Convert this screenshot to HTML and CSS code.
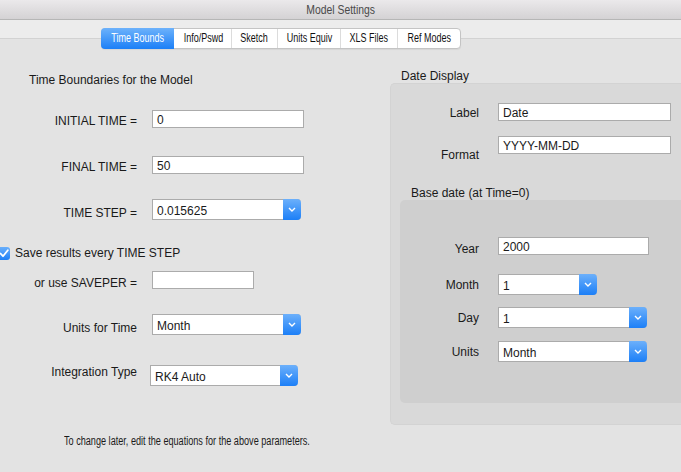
FILE: index.html
```html
<!DOCTYPE html>
<html>
<head>
<meta charset="utf-8">
<title>Model Settings</title>
<link rel="stylesheet" href="styles.css">
</head>
<body>
<div class="titlebar"><span class="narrow title-text">Model Settings</span></div>
<div class="tabbar">
  <div class="segmented">
    <div class="seg active"><span class="narrow">Time Bounds</span></div>
    <div class="seg"><span class="narrow">Info/Pswd</span></div>
    <div class="seg"><span class="narrow">Sketch</span></div>
    <div class="seg"><span class="narrow">Units Equiv</span></div>
    <div class="seg"><span class="narrow">XLS Files</span></div>
    <div class="seg"><span class="narrow">Ref Modes</span></div>
  </div>
</div>
<div class="content">
  <div class="left">
    <div class="heading">Time Boundaries for the Model</div>
    <div class="row row-initial">
      <span class="lbl pt4">INITIAL TIME =</span>
      <div class="field w152">0</div>
    </div>
    <div class="row row-final">
      <span class="lbl pt4">FINAL TIME =</span>
      <div class="field w152">50</div>
    </div>
    <div class="row row-step">
      <span class="lbl pt7">TIME STEP =</span>
      <div class="select w149"><span class="select-val">0.015625</span><span class="select-btn"><svg width="8" height="5" viewBox="0 0 8 5"><polyline points="1,1 4,4 7,1" fill="none" stroke="#fff" stroke-width="1.4"/></svg></span></div>
    </div>
    <div class="check-row">
      <span class="checkbox"><svg width="10" height="9" viewBox="0 0 10 9"><polyline points="1.5,4.5 4,7.2 8.8,1.2" fill="none" stroke="#fff" stroke-width="1.8" stroke-linecap="round" stroke-linejoin="round"/></svg></span>
      <span class="check-label">Save results every TIME STEP</span>
    </div>
    <div class="row row-saveper">
      <span class="lbl pt5">or use SAVEPER =</span>
      <div class="field w102"></div>
    </div>
    <div class="row row-units">
      <span class="lbl pt7">Units for Time</span>
      <div class="select w149"><span class="select-val">Month</span><span class="select-btn"><svg width="8" height="5" viewBox="0 0 8 5"><polyline points="1,1 4,4 7,1" fill="none" stroke="#fff" stroke-width="1.4"/></svg></span></div>
    </div>
    <div class="row row-integration">
      <span class="lbl">Integration Type</span>
      <div class="select w148 tight"><span class="select-val">RK4 Auto</span><span class="select-btn"><svg width="8" height="5" viewBox="0 0 8 5"><polyline points="1,1 4,4 7,1" fill="none" stroke="#fff" stroke-width="1.4"/></svg></span></div>
    </div>
    <p class="note"><span class="note-text">To change later, edit the equations for the above parameters.</span></p>
  </div>
  <div class="right">
    <div class="group-title">Date Display</div>
    <div class="panel">
      <div class="prow">
        <span class="plbl pt3">Label</span>
        <div class="field w173">Date</div>
      </div>
      <div class="prow prow-format">
        <span class="plbl pt12">Format</span>
        <div class="field w173">YYYY-MM-DD</div>
      </div>
      <div class="group-title sub">Base date (at Time=0)</div>
      <div class="inner-panel">
        <div class="prow">
          <span class="plbl pt5">Year</span>
          <div class="field w151">2000</div>
        </div>
        <div class="prow prow-month">
          <span class="plbl pt4">Month</span>
          <div class="select w99"><span class="select-val">1</span><span class="select-btn"><svg width="8" height="5" viewBox="0 0 8 5"><polyline points="1,1 4,4 7,1" fill="none" stroke="#fff" stroke-width="1.4"/></svg></span></div>
        </div>
        <div class="prow prow-day">
          <span class="plbl pt4">Day</span>
          <div class="select w149"><span class="select-val">1</span><span class="select-btn"><svg width="8" height="5" viewBox="0 0 8 5"><polyline points="1,1 4,4 7,1" fill="none" stroke="#fff" stroke-width="1.4"/></svg></span></div>
        </div>
        <div class="prow prow-units">
          <span class="plbl pt4">Units</span>
          <div class="select w149"><span class="select-val">Month</span><span class="select-btn"><svg width="8" height="5" viewBox="0 0 8 5"><polyline points="1,1 4,4 7,1" fill="none" stroke="#fff" stroke-width="1.4"/></svg></span></div>
        </div>
      </div>
    </div>
  </div>
</div>
</body>
</html>
```

FILE: styles.css
```css
* { box-sizing: border-box; }

body {
  margin: 0;
  width: 681px;
  height: 472px;
  overflow: hidden;
  background: #e3e3e3;
  font-family: "Liberation Sans", Arial, sans-serif;
  font-size: 12px;
  color: #1a1a1a;
}

.narrow {
  display: inline-block;
  white-space: nowrap;
  transform: scaleX(0.72);
}

.titlebar {
  height: 20px;
  line-height: 19px;
  text-align: center;
  background: linear-gradient(#ebe9eb, #d4d2d4);
  border-bottom: 1px solid #b6b6b6;
  font-size: 13.5px;
  color: #4a4a4a;
}

.title-text { transform: scaleX(0.77); }

.tabbar {
  height: 29px;
  padding: 8px 0 0 101px;
  background: linear-gradient(#ececec 0 18px, #d2d2d2 18px 19px, #e3e3e3 19px);
}

.segmented {
  display: grid;
  grid-template-columns: 72px 57px 46px 63px 57px 63px;
  width: 360px;
  height: 21px;
  border: 1px solid #c4c4c4;
  border-radius: 4px;
  background: #fff;
  box-shadow: 0 1px 1px rgba(0, 0, 0, 0.06);
  font-size: 12.5px;
  line-height: 19px;
  text-align: center;
  color: #111;
}

.seg { white-space: nowrap; }
.seg + .seg { border-left: 1px solid #dcdcdc; }

.seg.active {
  margin: -1px 0 -1px -1px;
  line-height: 21px;
  background: linear-gradient(#6db2fb, #1b7ff7);
  color: #fff;
  border-radius: 4px 0 0 4px;
}

.seg.active + .seg { border-left-color: transparent; }

.content { display: flex; }

.left { width: 390px; flex: none; }
.right { flex: 1; min-width: 0; }

.heading { margin: 24px 0 0 29px; line-height: 14px; }

.row { display: flex; align-items: flex-start; }

.lbl {
  width: 137px;
  margin-right: 15px;
  text-align: right;
  line-height: 14px;
  white-space: nowrap;
}

.pt3 { padding-top: 3px; }
.pt4 { padding-top: 4px; }
.pt5 { padding-top: 5px; }
.pt7 { padding-top: 7px; }
.pt12 { padding-top: 12px; }

.row-initial { margin-top: 23px; }
.row-final { margin-top: 28px; }
.row-step { margin-top: 25px; }
.row-saveper { margin-top: 11px; }
.row-units { margin-top: 24px; }
.row-integration { margin-top: 30px; }
.row-integration .lbl { margin-right: 13px; }

.field {
  height: 18px;
  border: 1px solid #ababab;
  background: #fff;
  padding: 3px 0 0 4px;
  line-height: 13px;
  white-space: nowrap;
}

.select {
  display: flex;
  height: 21px;
  border: 1px solid #ababab;
  border-right: none;
  border-radius: 0 4px 4px 0;
  background: #fff;
}

.select-val {
  flex: 1;
  padding: 3px 0 0 4px;
  line-height: 16px;
  white-space: nowrap;
}

.select-btn {
  flex: none;
  width: 18px;
  margin: -1px 0;
  display: flex;
  align-items: center;
  justify-content: center;
  background: linear-gradient(#6cb0fb, #1c7ff7);
  border-radius: 0 4px 4px 0;
}

.w99 { width: 99px; }
.w102 { width: 102px; }
.w148 { width: 148px; }
.w149 { width: 149px; }
.w151 { width: 151px; }
.w152 { width: 152px; }
.w173 { width: 173px; }

.check-row {
  display: flex;
  align-items: center;
  margin: 26px 0 0 -3px;
  line-height: 14px;
}

.checkbox {
  width: 13px;
  height: 13px;
  border-radius: 3px;
  background: linear-gradient(#6aaffb, #1d7ff6);
  display: flex;
  align-items: center;
  justify-content: center;
}

.check-label { margin-left: 5px; }

.note {
  margin: 48px 0 0 64px;
  font-size: 12px;
  line-height: 14px;
  white-space: nowrap;
}

.note-text {
  display: inline-block;
  transform: scaleX(0.76);
  transform-origin: left center;
}

.group-title { margin: 20px 0 0 11px; line-height: 14px; }
.group-title.sub { margin: 24px 0 0 20px; }

.panel {
  height: 342px;
  padding-top: 19px;
  background: #d9d9d9;
  border: 1px solid #d3d3d3;
  border-right: none;
  border-radius: 5px 0 0 5px;
}

.prow { display: flex; align-items: flex-start; }

.plbl {
  width: 88px;
  margin-right: 19px;
  text-align: right;
  line-height: 14px;
  white-space: nowrap;
}

.prow-format { margin-top: 15px; }

.inner-panel {
  height: 203px;
  margin-left: 9px;
  padding-top: 37px;
  background: #cfcfcf;
  border-radius: 5px 0 0 5px;
}

.inner-panel .plbl { width: 79px; }

.prow-month { margin-top: 18px; }
.prow-day { margin-top: 12px; }
.prow-units { margin-top: 13px; }
```
